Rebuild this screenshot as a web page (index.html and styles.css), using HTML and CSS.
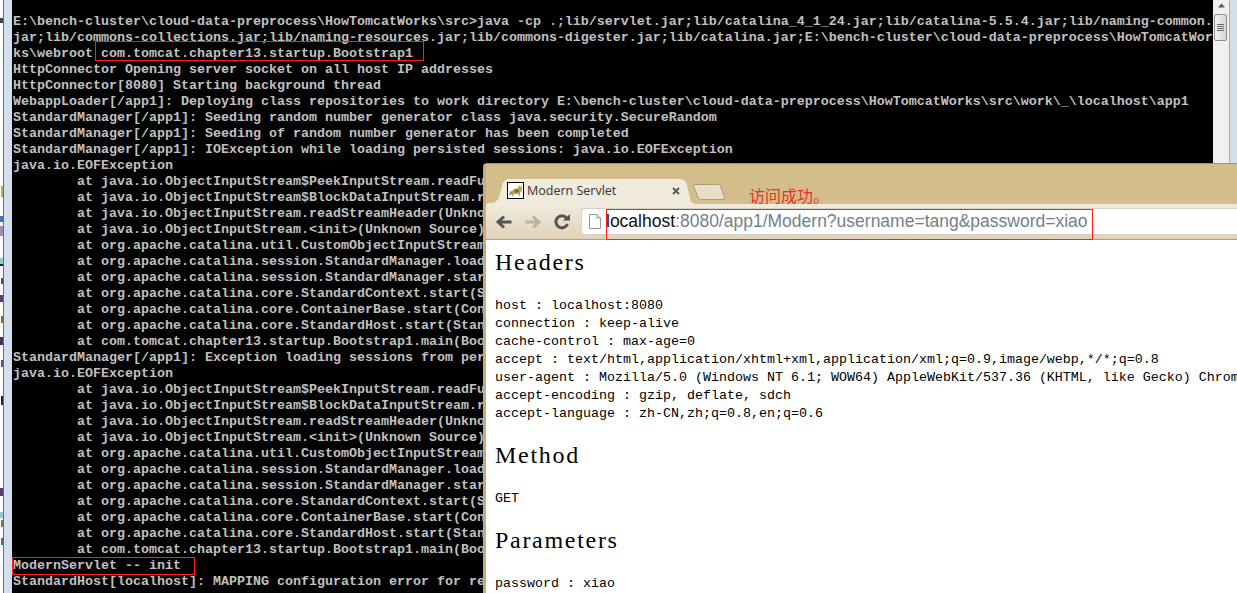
FILE: index.html
```html
<!DOCTYPE html>
<html lang="en">
<head>
<meta charset="utf-8">
<title>Modern Servlet</title>
<link rel="stylesheet" href="styles.css">
</head>
<body>
<div class="desktop">
  <svg class="behind" width="3" height="593" viewBox="0 0 3 593">
    <rect x="0" y="4" width="3" height="10" fill="#fff"/>
    <rect x="0" y="18" width="3" height="5" fill="#445"/>
    <rect x="1" y="186" width="2" height="11" fill="#c9a45a"/>
    <rect x="0" y="216" width="3" height="6" fill="#3f74b5"/>
    <rect x="0" y="226" width="3" height="10" fill="#a58bb0"/>
    <rect x="0" y="258" width="3" height="6" fill="#8ecbd8"/>
    <rect x="0" y="264" width="3" height="2" fill="#222"/>
    <rect x="1" y="278" width="2" height="6" fill="#5a4a3a"/>
    <rect x="0" y="295" width="3" height="7" fill="#5d3a6b"/>
    <rect x="1" y="316" width="2" height="7" fill="#a5622e"/>
    <rect x="0" y="337" width="3" height="8" fill="#4a3060"/>
    <rect x="1" y="360" width="2" height="7" fill="#557"/>
    <rect x="1" y="396" width="2" height="9" fill="#223"/>
    <rect x="0" y="488" width="3" height="8" fill="#5d3a6b"/>
    <rect x="0" y="512" width="3" height="6" fill="#8ecbd8"/>
    <rect x="1" y="520" width="2" height="7" fill="#776"/>
    <rect x="1" y="538" width="2" height="7" fill="#667"/>
  </svg>
  <div class="frame-left"></div>
  <pre class="console">E:\bench-cluster\cloud-data-preprocess\HowTomcatWorks\src&gt;java -cp .;lib/servlet.jar;lib/catalina_4_1_24.jar;lib/catalina-5.5.4.jar;lib/naming-common.
jar;lib/commons-collections.jar;lib/naming-resources.jar;lib/commons-digester.jar;lib/catalina.jar;E:\bench-cluster\cloud-data-preprocess\HowTomcatWor
ks\webroot com.tomcat.chapter13.startup.Bootstrap1
HttpConnector Opening server socket on all host IP addresses
HttpConnector[8080] Starting background thread
WebappLoader[/app1]: Deploying class repositories to work directory E:\bench-cluster\cloud-data-preprocess\HowTomcatWorks\src\work\_\localhost\app1
StandardManager[/app1]: Seeding random number generator class java.security.SecureRandom
StandardManager[/app1]: Seeding of random number generator has been completed
StandardManager[/app1]: IOException while loading persisted sessions: java.io.EOFException
java.io.EOFException
        at java.io.ObjectInputStream$PeekInputStream.readFu
        at java.io.ObjectInputStream$BlockDataInputStream.r
        at java.io.ObjectInputStream.readStreamHeader(Unkno
        at java.io.ObjectInputStream.&lt;init&gt;(Unknown Source)
        at org.apache.catalina.util.CustomObjectInputStream
        at org.apache.catalina.session.StandardManager.load
        at org.apache.catalina.session.StandardManager.star
        at org.apache.catalina.core.StandardContext.start(S
        at org.apache.catalina.core.ContainerBase.start(Con
        at org.apache.catalina.core.StandardHost.start(Stan
        at com.tomcat.chapter13.startup.Bootstrap1.main(Boo
StandardManager[/app1]: Exception loading sessions from per
java.io.EOFException
        at java.io.ObjectInputStream$PeekInputStream.readFu
        at java.io.ObjectInputStream$BlockDataInputStream.r
        at java.io.ObjectInputStream.readStreamHeader(Unkno
        at java.io.ObjectInputStream.&lt;init&gt;(Unknown Source)
        at org.apache.catalina.util.CustomObjectInputStream
        at org.apache.catalina.session.StandardManager.load
        at org.apache.catalina.session.StandardManager.star
        at org.apache.catalina.core.StandardContext.start(S
        at org.apache.catalina.core.ContainerBase.start(Con
        at org.apache.catalina.core.StandardHost.start(Stan
        at com.tomcat.chapter13.startup.Bootstrap1.main(Boo
ModernServlet -- init
StandardHost[localhost]: MAPPING configuration error for re</pre>
  <div class="scrollbar">
    <svg class="scroll-arrow" width="17" height="13" viewBox="0 0 17 13"><path d="M5 7.500h7L8.500 3.500z" fill="#555"/></svg>
    <div class="scroll-thumb"><span></span><span></span><span></span><span></span></div>
  </div>
  <div class="frame-right"></div>

  <div class="mark mark-cmd"></div>
  <div class="mark mark-init"></div>

  <section class="browser">
    <div class="tabstrip">
      <div class="tab">
        <svg class="tab-shape" width="208" height="25" viewBox="0 0 208 25"><path d="M0 25C9 25 12 22 14 14L16 5C17 2 19 .5 22 .5H193C196 .5 198 2 199 5L202 17C203 22 204 25 208 25Z" fill="#f1ebdd" stroke="#f7f2e6"/></svg>
        <svg class="favicon" width="17" height="17" viewBox="0 0 17 17">
          <rect x=".5" y=".5" width="16" height="16" fill="#fff" stroke="#000"/>
          <path d="M2 13L5 9L7 7L11 6L12 3L14 5L15 3L15 8L13 11L13 15L11 12L7 12L6 15L4 12Z" fill="#c9a24e"/>
          <path d="M2 14L6 10L3 9Z" fill="#8a8a7a"/>
          <path d="M7 8L11 7L12 10L8 11Z" fill="#8c6b2c"/>
        </svg>
        <span class="tab-title">Modern Servlet</span>
        <svg class="tab-close" width="8" height="8" viewBox="0 0 8 8"><path d="M1 1L7 7M7 1L1 7" stroke="#555" stroke-width="1.800"/></svg>
      </div>
      <svg class="newtab" width="33" height="16" viewBox="0 0 33 16"><path d="M1 .5H25C26 .5 27 1 27.500 2L31 12C32 14 32 15.500 30 15.500H9C7 15.500 6 15 5 13L1 3C.5 1.500 0 .5 1 .5Z" fill="#e8dfc9" stroke="#a99a75"/></svg>
      <span class="note">访问成功。</span>
    </div>
    <div class="toolbar">
      <svg class="nav" width="18" height="16" viewBox="0 0 18 16"><path d="M16.500 8H4M9 2.500L3 8L9 13.500" fill="none" stroke="#555" stroke-width="3"/></svg>
      <svg class="nav" width="18" height="16" viewBox="0 0 18 16"><path d="M1.500 8H14M9 2.500L15 8L9 13.500" fill="none" stroke="#b9b3a5" stroke-width="3"/></svg>
      <svg class="nav" width="18" height="18" viewBox="0 0 18 18"><path d="M14.500 11A6 6 0 1 1 13.500 5L14.500 6" fill="none" stroke="#555" stroke-width="3"/><path d="M10 7.500H17V1Z" fill="#555"/></svg>
      <div class="omnibox">
        <svg class="page-icon" width="12" height="15" viewBox="0 0 12 15"><path d="M.5 .5H8L11.500 4V14.500H.5Z" fill="#fff" stroke="#999"/><path d="M8 .5V4H11.500" fill="#ddd" stroke="#999"/></svg>
        <span class="url"><b>localhost</b>:8080/app1/Modern?username=tang&amp;password=xiao</span>
      </div>
    </div>
    <div class="mark mark-url"></div>
    <main class="page">
      <h1>Headers</h1>
      <pre class="block">host : localhost:8080
connection : keep-alive
cache-control : max-age=0
accept : text/html,application/xhtml+xml,application/xml;q=0.9,image/webp,*/*;q=0.8
user-agent : Mozilla/5.0 (Windows NT 6.1; WOW64) AppleWebKit/537.36 (KHTML, like Gecko) Chrom
accept-encoding : gzip, deflate, sdch
accept-language : zh-CN,zh;q=0.8,en;q=0.6</pre>
      <h1>Method</h1>
      <pre class="block">GET</pre>
      <h1>Parameters</h1>
      <pre class="block">password : xiao</pre>
    </main>
  </section>
</div>
</body>
</html>
```
FILE: styles.css
```css
html, body { margin: 0; padding: 0; }
body { width: 1237px; height: 593px; overflow: hidden; background: #fff; }

.desktop {
  position: relative;
  display: flex;
  width: 1237px;
  height: 593px;
  overflow: hidden;
  background: #fff;
}
.behind { flex: none; }
.frame-left {
  flex: none;
  width: 8px;
  background: #d3dfec;
  border-left: 1px solid #6d6d6d;
}
.console {
  flex: 1;
  margin: 0;
  padding: 14px 0 0 1px;
  overflow: hidden;
  background: #000;
  color: #c0c0c0;
  font: 700 13.33px/16px "Liberation Mono", monospace;
  white-space: pre;
  tab-size: 8;
}
.scrollbar {
  flex: none;
  width: 17px;
  background: #f0f0f0;
  border-right: 1px solid #a9a9a9;
  box-sizing: border-box;
}
.scroll-arrow { display: block; }
.scroll-thumb {
  display: flex;
  flex-direction: column;
  justify-content: center;
  align-items: center;
  gap: 1px;
  width: 13px;
  height: 27px;
  margin: 1px 0 0 1px;
  box-sizing: border-box;
  border: 1px solid #8f8f8f;
  border-radius: 2px;
  background: linear-gradient(90deg, #f4f4f4, #d6d6d6);
}
.scroll-thumb span { width: 7px; height: 1px; background: #666; }
.frame-right { flex: none; width: 7px; background: #d3dfec; }

.mark {
  position: absolute;
  box-sizing: border-box;
  border: 1px solid #ff1f1f;
  pointer-events: none;
}
.mark-cmd { left: 95px; top: 41px; width: 329px; height: 20px; }
.mark-init { left: 12px; top: 557px; width: 183px; height: 18px; }
.mark-url { left: 120px; top: 45px; width: 487px; height: 31px; z-index: 2; }

.browser {
  position: absolute;
  left: 483px;
  top: 163px;
  right: 0;
  bottom: 0;
  display: flex;
  flex-direction: column;
  box-sizing: border-box;
  border-top: 1px solid #a79465;
  border-left: 3px solid #c2ad7e;
  border-top-left-radius: 4px;
  background: #d3bd8b;
}
.tabstrip {
  position: relative;
  display: flex;
  align-items: flex-end;
  flex: none;
  height: 40px;
  padding-left: 1px;
}
.tab {
  position: relative;
  display: flex;
  align-items: center;
  flex: none;
  width: 208px;
  height: 25px;
  box-sizing: border-box;
  padding: 0 15px 2px 20px;
}
.tab-shape { position: absolute; left: 0; top: 0; }
.favicon { position: relative; flex: none; }
.tab-title {
  position: relative;
  margin-left: 3px;
  font: 12.500px "Open Sans", sans-serif;
  color: #333;
  white-space: nowrap;
}
.tab-close { position: relative; margin-left: auto; }
.newtab { flex: none; margin: 0 0 4px -2px; }
.note {
  margin: 0 0 0 23px;
  font: 16px/18px "Noto Sans CJK SC", sans-serif;
  color: #f02c2c;
  white-space: nowrap;
}
.toolbar {
  display: flex;
  align-items: center;
  flex: none;
  height: 36px;
  box-sizing: border-box;
  padding-left: 9px;
  gap: 11px;
  border-bottom: 1px solid #a9a294;
  background: linear-gradient(#f0ebdd, #e0d3b8);
}
.nav { flex: none; }
.omnibox {
  display: flex;
  align-items: center;
  flex: 1;
  height: 27px;
  margin-left: -1px;
  box-sizing: border-box;
  padding-left: 7px;
  background: #fff;
  border: 1px solid #d8d2c4;
  border-right: 0;
  border-radius: 3px 0 0 3px;
}
.page-icon { flex: none; }
.url {
  margin-left: 5px;
  font: 17.500px "Liberation Sans", sans-serif;
  color: #737f8a;
  white-space: nowrap;
}
.url b { font-weight: 400; color: #111; }

.page {
  flex: 1;
  overflow: hidden;
  padding: 0 0 0 9px;
  background: #fff;
  color: #000;
}
.page h1 {
  margin: 0;
  font: 400 24px/28px "Liberation Serif", serif;
  letter-spacing: 1.700px;
}
.page h1:first-child { margin-top: 8px; }
.block {
  margin: 20.500px 0 18.500px;
  font: 13.33px/18px "Liberation Mono", monospace;
  white-space: pre;
}
```
